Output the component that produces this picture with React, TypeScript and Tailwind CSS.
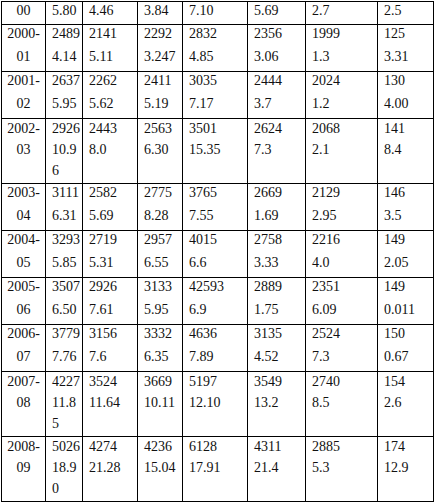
const rows: { year: string[]; cells: string[][] }[] = [
  { year: ['00'], cells: [['5.80'], ['4.46'], ['3.84'], ['7.10'], ['5.69'], ['2.7'], ['2.5']] },
  { year: ['2000-', '01'], cells: [['2489', '4.14'], ['2141', '5.11'], ['2292', '3.247'], ['2832', '4.85'], ['2356', '3.06'], ['1999', '1.3'], ['125', '3.31']] },
  { year: ['2001-', '02'], cells: [['2637', '5.95'], ['2262', '5.62'], ['2411', '5.19'], ['3035', '7.17'], ['2444', '3.7'], ['2024', '1.2'], ['130', '4.00']] },
  { year: ['2002-', '03'], cells: [['2926', '10.9', '6'], ['2443', '8.0'], ['2563', '6.30'], ['3501', '15.35'], ['2624', '7.3'], ['2068', '2.1'], ['141', '8.4']] },
  { year: ['2003-', '04'], cells: [['3111', '6.31'], ['2582', '5.69'], ['2775', '8.28'], ['3765', '7.55'], ['2669', '1.69'], ['2129', '2.95'], ['146', '3.5']] },
  { year: ['2004-', '05'], cells: [['3293', '5.85'], ['2719', '5.31'], ['2957', '6.55'], ['4015', '6.6'], ['2758', '3.33'], ['2216', '4.0'], ['149', '2.05']] },
  { year: ['2005-', '06'], cells: [['3507', '6.50'], ['2926', '7.61'], ['3133', '5.95'], ['42593', '6.9'], ['2889', '1.75'], ['2351', '6.09'], ['149', '0.011']] },
  { year: ['2006-', '07'], cells: [['3779', '7.76'], ['3156', '7.6'], ['3332', '6.35'], ['4636', '7.89'], ['3135', '4.52'], ['2524', '7.3'], ['150', '0.67']] },
  { year: ['2007-', '08'], cells: [['4227', '11.8', '5'], ['3524', '11.64'], ['3669', '10.11'], ['5197', '12.10'], ['3549', '13.2'], ['2740', '8.5'], ['154', '2.6']] },
  { year: ['2008-', '09'], cells: [['5026', '18.9', '0'], ['4274', '21.28'], ['4236', '15.04'], ['6128', '17.91'], ['4311', '21.4'], ['2885', '5.3'], ['174', '12.9']] },
];

// the cut-off first row is shorter, rows with a wrapped third line use tighter spacing
function lineClass(rowIdx: number, lines: number) {
  if (rowIdx === 0) return 'h-[22px] leading-[17px]';
  if (lines === 3) return 'h-[21px] leading-[17px]';
  return 'h-[23px] leading-[17px]';
}

function Cell({ lines, rowLines, rowIdx, center }: { lines: string[]; rowLines: number; rowIdx: number; center?: boolean }) {
  const cls = lineClass(rowIdx, rowLines);
  return (
    <td className={`border border-black align-top p-0 whitespace-nowrap ${center ? 'text-center' : 'pl-[6px]'}`}>
      <div className={rowLines === 3 ? 'pt-px' : ''}>
        {Array.from({ length: rowLines }).map((_, k) => (
          <div key={k} className={cls}>{lines[k] ?? '\u00a0'}</div>
        ))}
      </div>
    </td>
  );
}

export default function App() {
  return (
    <div className="w-[437px] h-[502px] bg-white overflow-hidden pl-px pt-px [font-family:'Liberation_Serif',serif] text-[14px] text-[#111]">
      <table className="table-fixed border-collapse">
        <colgroup>
          <col className="w-[44px]" />
          <col className="w-[37px]" />
          <col className="w-[55px]" />
          <col className="w-[45px]" />
          <col className="w-[65px]" />
          <col className="w-[58px]" />
          <col className="w-[72px]" />
          <col className="w-[56px]" />
        </colgroup>
        <tbody>
          {rows.map((r, i) => {
            const n = Math.max(...r.cells.map(c => c.length), r.year.length);
            return (
              <tr key={i}>
                <Cell lines={r.year} rowLines={n} rowIdx={i} center />
                {r.cells.map((c, j) => (
                  <Cell key={j} lines={c} rowLines={n} rowIdx={i} />
                ))}
              </tr>
            );
          })}
        </tbody>
      </table>
    </div>
  );
}
